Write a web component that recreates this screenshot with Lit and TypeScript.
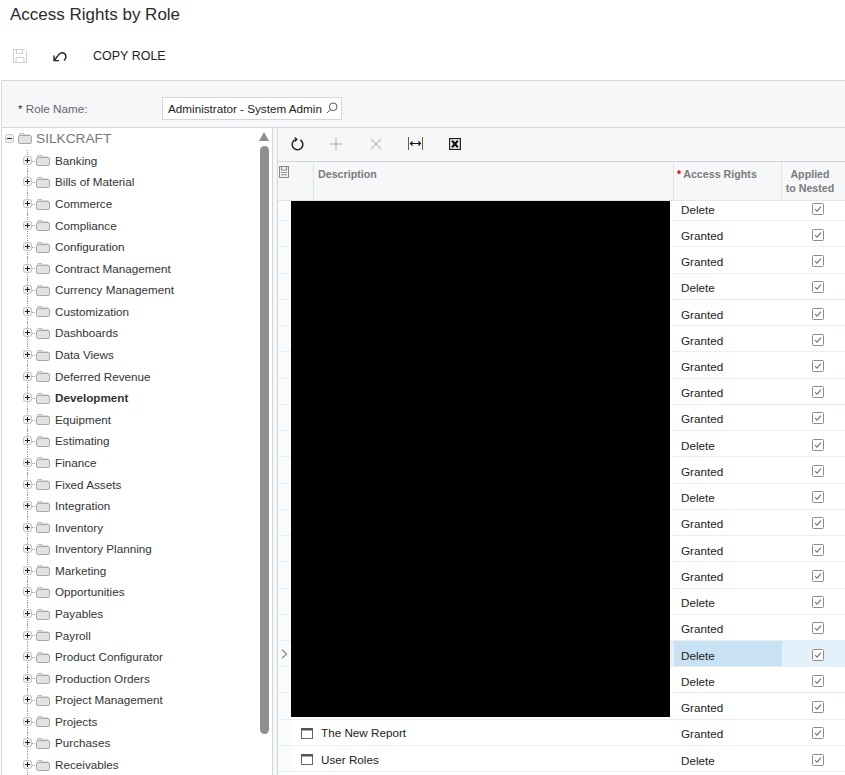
import { css, html, LitElement, svg } from 'lit';
import { customElement } from 'lit/decorators.js';
import { classMap } from 'lit/directives/class-map.js';

const MODULES = [
    'Banking', 'Bills of Material', 'Commerce', 'Compliance', 'Configuration', 'Contract Management',
    'Currency Management', 'Customization', 'Dashboards', 'Data Views', 'Deferred Revenue', 'Development',
    'Equipment', 'Estimating', 'Finance', 'Fixed Assets', 'Integration', 'Inventory', 'Inventory Planning',
    'Marketing', 'Opportunities', 'Payables', 'Payroll', 'Product Configurator', 'Production Orders',
    'Project Management', 'Projects', 'Purchases', 'Receivables',
];

const RIGHTS = [
    'Delete', 'Granted', 'Granted', 'Delete', 'Granted', 'Granted', 'Granted', 'Granted', 'Granted', 'Delete',
    'Granted', 'Delete', 'Granted', 'Granted', 'Granted', 'Delete', 'Granted', 'Delete', 'Delete', 'Granted',
    'Granted', 'Delete',
];
const NAMES: Record<number, string> = { 20: 'The New Report', 21: 'User Roles' };
const SELECTED = 17;

const folder = html`<svg class="folder" width="14" height="11" viewBox="0 0 14 11">
  <path d="M1.5 2.5V1.5a1 1 0 0 1 1-1h3l1 1.5h5a1 1 0 0 1 1 1" fill="#e6e6e6" stroke="#b5b5b5"/>
  <rect x="0.5" y="2.5" width="13" height="8" rx="1.5" fill="#e2e2e2" stroke="#a9a9a9"/>
</svg>`;

const expander = (open: boolean) => html`<svg class="exp" width="9" height="9" viewBox="0 0 9 9">
  <rect x="0.5" y="0.5" width="8" height="8" rx="2" fill="#f0f0f0" stroke="#c4c4c4"/>
  <path d="M2 4.5h5" stroke="#222"/>
  ${open ? '' : svg`<path d="M4.5 2v5" stroke="#222"/>`}
</svg>`;

const check = html`<svg width="12" height="12" viewBox="0 0 12 12">
  <rect x="0.5" y="0.5" width="11" height="11" rx="1" fill="#fff" stroke="#8c8c8c"/>
  <path d="M3 6l2 2.2L9 3.6" fill="none" stroke="#6f6f6f" stroke-width="1.1"/>
</svg>`;

const screenIcon = html`<svg width="12" height="11" viewBox="0 0 12 11">
  <rect x="0.5" y="0.5" width="11" height="10" fill="#fff" stroke="#666"/>
  <rect x="0" y="0" width="12" height="2.5" fill="#555"/>
</svg>`;

@customElement('app-root')
export class AppRoot extends LitElement {
    static override styles = css`
    :host {
      display: block;
      width: 845px;
      height: 775px;
      overflow: hidden;
      background: #fff;
      color: #222;
      font: 11.7px "Liberation Sans", Arial, sans-serif;
    }
    .title {
      height: 31px;
      padding-left: 10px;
      font-size: 17px;
      line-height: 30px;
      color: #2b2b2b;
    }
    .toolbar {
      display: flex;
      align-items: center;
      height: 49px;
    }
    .toolbar svg { display: block; }
    .save { margin-left: 13px; }
    .undo { margin-left: 26px; }
    .copy {
      margin-left: 26px;
      font-size: 12.5px;
      color: #222;
    }
    .form {
      display: flex;
      align-items: center;
      box-sizing: border-box;
      height: 47px;
      padding-top: 8px;
      margin-left: 1px;
      border-top: 1px solid #d4d7da;
      border-left: 1px solid #d4d7da;
      background: #f5f7f9;
    }
    .label {
      width: 160px;
      padding-left: 16px;
      box-sizing: border-box;
      color: #666;
    }
    .label b { font-weight: normal; color: #333; }
    .input {
      display: flex;
      align-items: center;
      box-sizing: border-box;
      width: 180px;
      height: 23px;
      padding-left: 5px;
      border: 1px solid #d4d7da;
      background: #fff;
      color: #222;
    }
    .input span {
      width: 153px;
      white-space: nowrap;
    }
    .input svg { margin-left: 5px; }
    .split {
      display: flex;
      height: 647px;
      margin-left: 1px;
      border-top: 1px solid #d4d7da;
      background: #f5f7f9;
    }
    .tree-pane {
      display: flex;
      box-sizing: border-box;
      width: 272px;
      border-left: 1px solid #d4d7da;
      border-right: 1px solid #d4d7da;
      background: #fff;
      overflow: hidden;
    }
    .tree {
      flex: 1;
      min-width: 0;
    }
    .node {
      position: relative;
      display: flex;
      align-items: center;
      height: 21.58px;
      white-space: nowrap;
      color: #333;
    }
    .root { color: #777; font-size: 13.7px; padding-left: 3px; }
    .root .exp { margin-right: 4px; }
    .root .folder { margin-right: 4px; }
    .child { padding-left: 21px; }
    .child::before {
      content: '';
      position: absolute;
      left: 25px;
      top: 0;
      bottom: 0;
      border-left: 1px dotted #999;
    }
    .child::after {
      content: '';
      position: absolute;
      left: 30px;
      top: 11px;
      width: 5px;
      border-top: 1px dotted #999;
    }
    .child .exp { position: relative; z-index: 1; margin-right: 4px; }
    .child .folder { position: relative; z-index: 1; margin: 1px 5px 0 0; }
    .node.bold { font-weight: bold; }
    .scrollbar {
      display: flex;
      flex-direction: column;
      align-items: center;
      flex: none;
      width: 12px;
      margin-right: 2px;
      padding-top: 4px;
    }
    .arrow {
      width: 0;
      height: 0;
      border-left: 5px solid transparent;
      border-right: 5px solid transparent;
      border-bottom: 9px solid #8f8f8f;
    }
    .thumb {
      width: 9px;
      height: 588px;
      margin-top: 5px;
      border-radius: 5px;
      background: #8f8f8f;
    }
    .grid-pane {
      flex: 1;
      min-width: 0;
      margin-left: 4px;
      border-left: 1px solid #d4d7da;
      overflow: hidden;
    }
    .grid-tools {
      display: flex;
      align-items: center;
      box-sizing: border-box;
      height: 33px;
      padding: 0 0 2px 13px;
      gap: 24px;
    }
    .grid-tools svg { display: block; flex: none; }
    .head, .row {
      display: grid;
      grid-template-columns: 14px 22px 360px 108px 1fr;
    }
    .head {
      height: 40px;
      box-sizing: border-box;
      border-top: 1px solid #d4d7da;
      border-bottom: 1px solid #e1e4e7;
      color: #7b7b7b;
      font-size: 10.7px;
      font-weight: bold;
    }
    .head > div { border-right: 1px solid #e1e4e7; padding-top: 5px; line-height: 14px; }
    .head > div:last-child { border-right: none; padding-right: 7px; text-align: center; }
    .head .gutter-head { padding-top: 4px; padding-left: 1px; border-right: none; }
    .head .desc { padding-left: 4px; }
    .head .rights { padding-left: 3px; }
    .star { color: #d0021b; margin-right: 2px; }
    .body {
      position: relative;
      height: 574px;
      background: #fff;
      overflow: hidden;
    }
    .rows { margin-top: -6px; }
    .row {
      box-sizing: border-box;
      height: 26.24px;
      border-bottom: 1px solid #e6eff6;
      color: #222;
    }
    .row > div { display: flex; align-items: center; }
    .gutter { background: #fafbfc; justify-content: center; padding-right: 2px; }
    .icon { padding: 2px 0 0 9px; }
    .name { padding: 1px 0 0 7px; }
    .right { padding: 3px 0 0 7px; }
    .applied { justify-content: center; padding: 2px 0 0 8px; }
    .row.selected { background: #e4f1fa; }
    .row.selected .right { background: #c8e1f3; }
    .redacted {
      position: absolute;
      left: 13px;
      top: 0;
      width: 379px;
      height: 516px;
      background: #000;
    }
  `;

    override render() {
        return html`
      <div class="title">Access Rights by Role</div>
      <div class="toolbar">
        <svg class="save" width="14" height="14" viewBox="0 0 14 14" fill="none" stroke="#cfcfcf">
          <path d="M.5.5h11l2 2v11H.5z"/><path d="M3.5.5v4h6v-4M3 13.5V8.5h8v5"/>
        </svg>
        <svg class="undo" width="14" height="12" viewBox="0 0 14 12" fill="none" stroke="#222" stroke-width="1.4">
          <path d="M1 5.5V10.6H6"/><path d="M1.6 10L6 4.4C7.8 2.2 11 2.2 12.4 4.6C13.4 6.6 12.6 9 11 10.6"/>
        </svg>
        <span class="copy">COPY ROLE</span>
      </div>
      <div class="form">
        <div class="label"><b>*</b> Role Name:</div>
        <div class="input">
          <span>Administrator - System Admin</span>
          <svg width="12" height="12" viewBox="0 0 12 12" fill="none" stroke="#555">
            <circle cx="7.2" cy="4.8" r="3.8"/><path d="M4.5 7.6L1 11"/>
          </svg>
        </div>
      </div>
      <div class="split">
        <div class="tree-pane">
          <div class="tree">
            <div class="node root">${expander(true)}${folder}SILKCRAFT</div>
            ${MODULES.map(m => html`
              <div class=${classMap({ node: true, child: true, bold: m === 'Development' })}>
                ${expander(false)}${folder}${m}
              </div>`)}
          </div>
          <div class="scrollbar"><div class="arrow"></div><div class="thumb"></div></div>
        </div>
        <div class="grid-pane">
          <div class="grid-tools">
            <svg width="13" height="14" viewBox="0 0 13 14" fill="none" stroke="#222" stroke-width="1.5">
              <path d="M5 2.4A5.3 5.3 0 1 0 9.4 3"/><path d="M3.6.4l2.4 2-2 2.2" stroke-width="1.2"/>
            </svg>
            <svg style="margin-left:1px" width="14" height="14" viewBox="0 0 14 14" stroke="#c4c4c4" stroke-width="1.4">
              <path d="M7 1v12M1 7h12"/>
            </svg>
            <svg style="margin-left:2px" width="14" height="14" viewBox="0 0 14 14" stroke="#c4c4c4" stroke-width="1.4">
              <path d="M2 2l10 10M12 2L2 12"/>
            </svg>
            <svg style="margin-left:1px" width="15" height="13" viewBox="0 0 15 13" fill="none" stroke="#111">
              <path d="M.5 0v13M14.5 0v13" stroke="#6b6230"/>
              <path d="M2.5 6.5h10"/><path d="M4.6 4.4L2.5 6.5 4.6 8.6M10.4 4.4L12.5 6.5 10.4 8.6" stroke-width="1.2"/>
            </svg>
            <svg style="margin-left:2px" width="12" height="12" viewBox="0 0 12 12">
              <rect x="0.6" y="0.6" width="10.8" height="10.8" fill="#f4f4f4" stroke="#222" stroke-width="1.2"/>
              <path d="M3 2.8L8.8 9.2M8.8 2.8L3 9.2" stroke="#111" stroke-width="2.2"/>
            </svg>
          </div>
          <div class="head">
            <div class="gutter-head">
              <svg width="10" height="12" viewBox="0 0 10 12" fill="none" stroke="#888" stroke-width="1.1">
                <rect x="0.5" y="0.5" width="9" height="11"/>
                <path d="M2.5 1v3h5V1M2 6.5h6M2 8.8h6"/>
              </svg>
            </div>
            <div></div>
            <div class="desc">Description</div>
            <div class="rights"><span class="star">*</span>Access Rights</div>
            <div>Applied<br />to Nested</div>
          </div>
          <div class="body">
            <div class="rows">
              ${RIGHTS.map((r, i) => html`
                <div class=${classMap({ row: true, selected: i === SELECTED })}>
                  <div class="gutter">
                    ${i === SELECTED ? html`<svg width="7" height="10" viewBox="0 0 7 10" fill="none" stroke="#8a8a8a" stroke-width="1.2"><path d="M1 .8L5.6 5 1 9.2"/></svg>` : ''}
                  </div>
                  <div class="icon">${NAMES[i] ? screenIcon : ''}</div>
                  <div class="name">${NAMES[i] ?? ''}</div>
                  <div class="right">${r}</div>
                  <div class="applied">${check}</div>
                </div>`)}
            </div>
            <div class="redacted"></div>
          </div>
        </div>
      </div>
    `;
    }
}
